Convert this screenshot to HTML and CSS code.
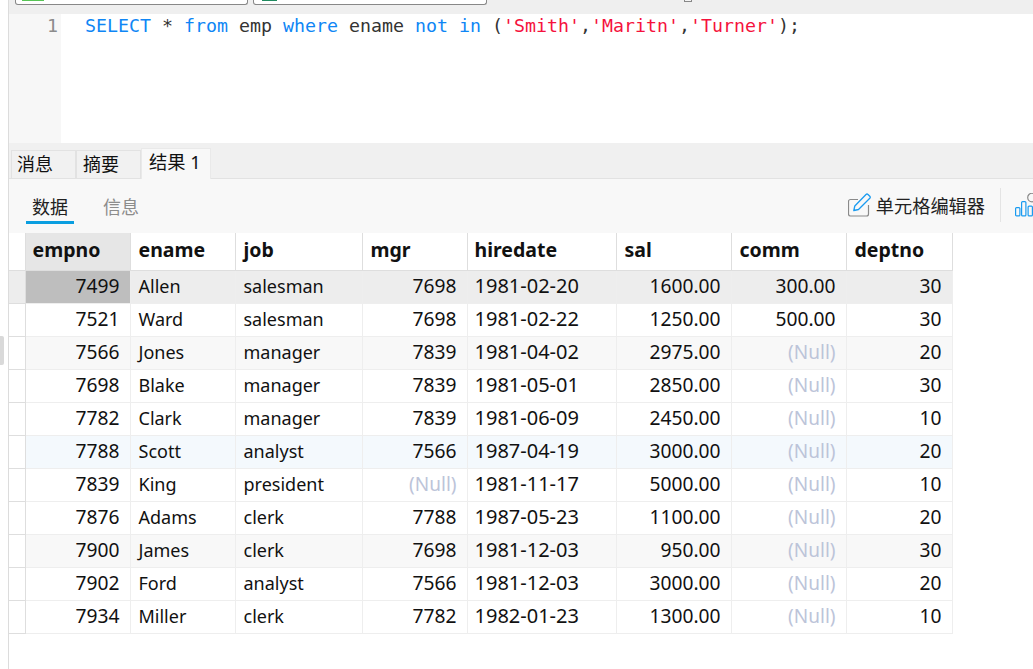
FILE: index.html
```html
<!DOCTYPE html>
<html lang="zh">
<head>
<meta charset="utf-8">
<title>emp</title>
<link rel="stylesheet" href="styles.css">
</head>
<body>
<div class="handle"></div>
<main class="app">
  <div class="topbar">
    <div class="field"><span class="chip chip-green"></span></div>
    <div class="field field-second"><span class="chip chip-teal"></span></div>
    <div class="mini"></div>
  </div>
  <section class="editor">
    <div class="gutter">1</div>
    <pre class="code"><span class="kw">SELECT</span> * <span class="kw">from</span> emp <span class="kw">where</span> ename <span class="kw">not</span> <span class="kw">in</span> (<span class="str">'Smith'</span>,<span class="str">'Maritn'</span>,<span class="str">'Turner'</span>);</pre>
  </section>
  <nav class="tabs">
    <span class="tab">消息</span>
    <span class="tab tab-second">摘要</span>
    <span class="tab tab-active">结果 1</span>
  </nav>
  <div class="toolbar">
    <span class="sub sub-active">数据</span>
    <span class="sub">信息</span>
    <div class="tools">
      <svg class="edit-icon" width="24" height="24" viewBox="0 0 24 24" fill="none">
        <path d="M10 6.500H2.500a2 2 0 0 0-2 2v12.500a2 2 0 0 0 2 2h16a2 2 0 0 0 2-2V12" stroke="#8a8a8a" stroke-width="1.200"/>
        <path d="M5.800 17.500l1-4.500L18 1.500a1.500 1.500 0 0 1 2 0l1.800 1.800a1.500 1.500 0 0 1 0 2L10.500 16.500z" stroke="#1a9bf0" stroke-width="1.300" stroke-linejoin="round"/>
      </svg>
      <span class="tool-label">单元格编辑器</span>
      <span class="divider"></span>
      <svg class="chart-icon" width="18" height="24" viewBox="0 0 18 24" fill="none" stroke="#1a9bf0" stroke-width="1.200">
        <rect x="0.600" y="14.600" width="4.300" height="8.300" rx="1"/>
        <rect x="6.600" y="8.600" width="4.300" height="14.300" rx="1"/>
        <rect x="13.100" y="13.100" width="4.300" height="9.800" rx="1"/>
        <circle cx="17" cy="4.500" r="4.300" stroke="#8a8a8a"/>
      </svg>
    </div>
  </div>
  <table class="grid">
    <colgroup>
      <col class="c-h"><col class="c-id"><col class="c-name"><col class="c-job"><col class="c-mgr"><col class="c-date"><col class="c-sal"><col class="c-comm"><col class="c-dept">
    </colgroup>
    <thead>
      <tr><th class="rh"></th><th class="cur">empno</th><th>ename</th><th>job</th><th>mgr</th><th class="th-date">hiredate</th><th>sal</th><th>comm</th><th>deptno</th></tr>
    </thead>
    <tbody>
      <tr class="sel"><td class="rh"></td><td class="r cell-cur">7499</td><td>Allen</td><td>salesman</td><td class="r">7698</td><td class="d">1981-02-20</td><td class="r">1600.00</td><td class="r">300.00</td><td class="r">30</td></tr>
      <tr><td class="rh"></td><td class="r">7521</td><td>Ward</td><td>salesman</td><td class="r">7698</td><td class="d">1981-02-22</td><td class="r">1250.00</td><td class="r">500.00</td><td class="r">30</td></tr>
      <tr class="alt"><td class="rh"></td><td class="r">7566</td><td>Jones</td><td>manager</td><td class="r">7839</td><td class="d">1981-04-02</td><td class="r">2975.00</td><td class="r nul">(Null)</td><td class="r">20</td></tr>
      <tr><td class="rh"></td><td class="r">7698</td><td>Blake</td><td>manager</td><td class="r">7839</td><td class="d">1981-05-01</td><td class="r">2850.00</td><td class="r nul">(Null)</td><td class="r">30</td></tr>
      <tr><td class="rh"></td><td class="r">7782</td><td>Clark</td><td>manager</td><td class="r">7839</td><td class="d">1981-06-09</td><td class="r">2450.00</td><td class="r nul">(Null)</td><td class="r">10</td></tr>
      <tr class="hover"><td class="rh"></td><td class="r">7788</td><td>Scott</td><td>analyst</td><td class="r">7566</td><td class="d">1987-04-19</td><td class="r">3000.00</td><td class="r nul">(Null)</td><td class="r">20</td></tr>
      <tr><td class="rh"></td><td class="r">7839</td><td>King</td><td>president</td><td class="r nul">(Null)</td><td class="d">1981-11-17</td><td class="r">5000.00</td><td class="r nul">(Null)</td><td class="r">10</td></tr>
      <tr><td class="rh"></td><td class="r">7876</td><td>Adams</td><td>clerk</td><td class="r">7788</td><td class="d">1987-05-23</td><td class="r">1100.00</td><td class="r nul">(Null)</td><td class="r">20</td></tr>
      <tr class="alt"><td class="rh"></td><td class="r">7900</td><td>James</td><td>clerk</td><td class="r">7698</td><td class="d">1981-12-03</td><td class="r">950.00</td><td class="r nul">(Null)</td><td class="r">30</td></tr>
      <tr><td class="rh"></td><td class="r">7902</td><td>Ford</td><td>analyst</td><td class="r">7566</td><td class="d">1981-12-03</td><td class="r">3000.00</td><td class="r nul">(Null)</td><td class="r">20</td></tr>
      <tr><td class="rh"></td><td class="r">7934</td><td>Miller</td><td>clerk</td><td class="r">7782</td><td class="d">1982-01-23</td><td class="r">1300.00</td><td class="r nul">(Null)</td><td class="r">10</td></tr>
    </tbody>
  </table>
</main>
</body>
</html>
```
FILE: styles.css
```css
* { box-sizing: border-box; }
html, body { margin: 0; height: 100%; overflow: hidden; background: #fff; }
body { font-family: "Noto Sans", "Noto Sans CJK SC", sans-serif; color: #111; }
.handle { position: absolute; left: 0; top: 336px; width: 4px; height: 29px; background: #d9d9d9; border-radius: 0 2px 2px 0; }
.app { margin-left: 8px; height: 669px; border-left: 1px solid #dcdcdc; display: flex; flex-direction: column; }
.topbar { height: 14px; background: #efefef; display: flex; gap: 5px; padding-left: 6px; align-items: flex-start; position: relative; }
.field { width: 233px; height: 5px; background: #fff; border: 1px solid #888; border-top: 0; border-radius: 0 0 3px 3px; padding-left: 6px; }
.field-second { width: 234px; padding-left: 8px; }
.chip { display: block; height: 1px; }
.chip-green { width: 22px; background: #57c455; }
.chip-teal { width: 15px; background: #1f8a5f; }
.mini { position: absolute; left: 675px; top: 0; width: 8px; height: 2px; background: #f4f4f4; border: 1px solid #888; border-top: 0; }
.editor { height: 129px; display: flex; background: #fff; }
.gutter { width: 52px; background: #f7f7f7; color: #8c8c8c; font: 18.270px/24px "DejaVu Sans Mono", monospace; text-align: right; padding: 0 3px 0 0; }
.code { margin: 0; padding-left: 24px; font: 18.270px/24px "DejaVu Sans Mono", monospace; color: #333; }
.kw { color: #0f86f5; }
.str { color: #f5123d; }
.tabs { height: 36px; background: #f0f0f0; display: flex; align-items: flex-end; padding-left: 2px; border-bottom: 1px solid #e2e2e2; font-size: 18px; }
.tab { width: 65px; height: 28px; line-height: 26px; padding-left: 5px; background: #f1f1f1; border: 1px solid #e2e2e2; border-bottom: 0; }
.tab-second { padding-left: 6px; }
.tab-active { width: 70px; height: 31px; padding-left: 7px; background: #f8f8f8; border-color: #e9e9e9; margin-bottom: -1px; font-size: 18.300px; }
.toolbar { height: 54px; background: #f8f8f8; display: flex; align-items: flex-start; padding-left: 17px; font-size: 18px; }
.sub { width: 48px; height: 45px; line-height: 56px; text-align: center; margin-right: 23px; color: #8c8c8c; }
.sub-active { color: #222; border-bottom: 3px solid #0a9ee0; }
.tools { margin-left: auto; display: flex; align-items: center; height: 47px; margin-top: 2px; }
.edit-icon { margin-right: 4px; flex: none; }
.tool-label { color: #222; font-size: 18.200px; }
.divider { width: 1px; height: 34px; background: #e4e4e4; margin: 0 14px 0 15px; }
.chart-icon { flex: none; }
.grid { border-collapse: collapse; table-layout: fixed; width: 943px; font-size: 18px; }
.c-h { width: 16px; } .c-id, .c-name { width: 105px; } .c-job { width: 127px; } .c-mgr { width: 105px; }
.c-date { width: 149px; } .c-sal, .c-comm { width: 115px; } .c-dept { width: 106px; }
.grid th { height: 37px; padding: 0 7px 4px 8px; text-align: left; font-size: 19.500px; line-height: 1; font-weight: 700; background: #fff; border-right: 1px solid #dedede; border-bottom: 1px solid #dedede; }
.grid th.rh { border-right: 1px solid #dedede; }
.grid th.cur { background: #e6e6e6; padding-left: 7px; }
.grid th.th-date { padding-left: 7px; }
.grid td { height: 33px; padding: 0 10px 2px 8px; line-height: 1; border-right: 1px solid #eeeeee; border-bottom: 1px solid #eeeeee; white-space: nowrap; }
.grid td.rh { border-right: 1px solid #dedede; border-bottom-color: #dedede; padding: 0; background: #fff; }
.grid td.r { text-align: right; font-size: 19.200px; }
.grid td.d { font-size: 20px; padding-left: 7px; }
.grid td.nul { color: #bcc4d9; font-size: 19px; padding-bottom: 0; }
.sel td { background: #ededed; }
.sel td.rh { background: #ededed; }
.grid td.cell-cur { background: #bebebe; }
.alt td { background: #f8f8f8; }
.hover td { background: #f4f9fd; }
```
